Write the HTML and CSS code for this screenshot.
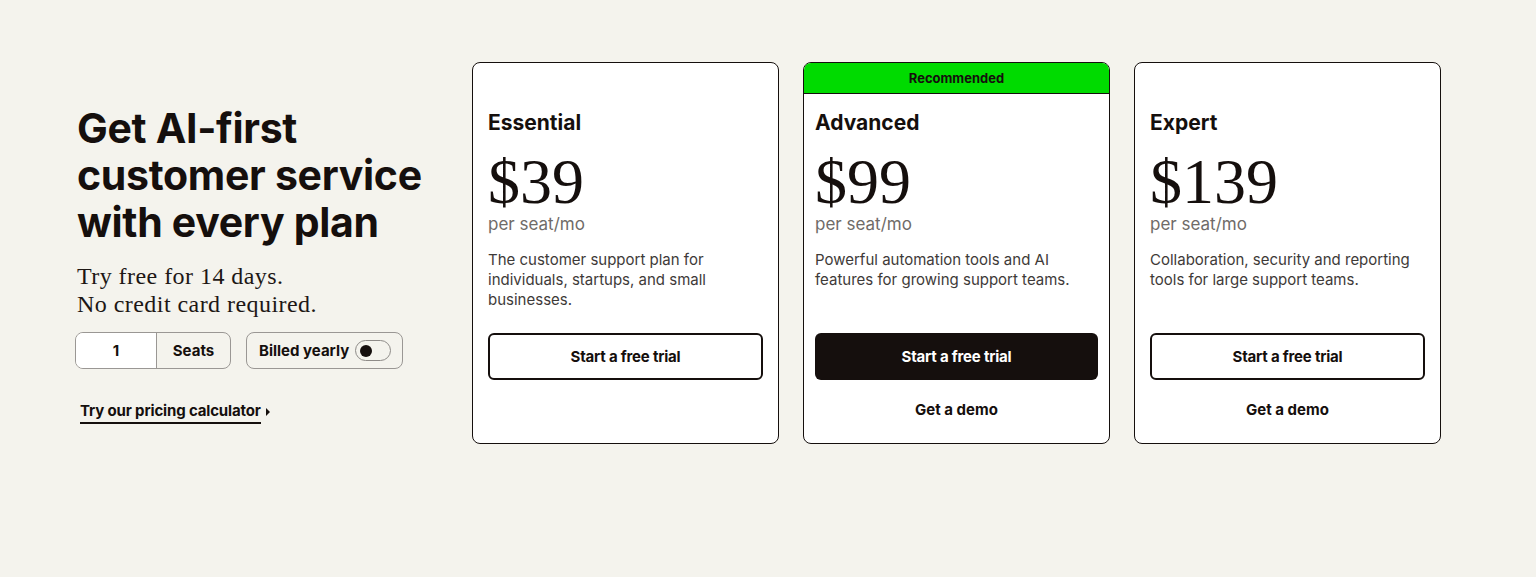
FILE: index.html
```html
<!DOCTYPE html>
<html lang="en">
<head>
<meta charset="utf-8">
<title>Pricing</title>
<link rel="stylesheet" href="styles.css">
</head>
<body>
<main class="pricing">
  <section class="intro">
    <h1 class="intro-title">Get AI-first customer service with every plan</h1>
    <p class="intro-sub">Try free for 14 days.<br>No credit card required.</p>
    <div class="controls">
      <div class="seats">
        <span class="seats-input">1</span>
        <span class="seats-label">Seats</span>
      </div>
      <div class="billing">
        <span class="billing-label">Billed yearly</span>
        <span class="toggle"><span class="knob"></span></span>
      </div>
    </div>
    <a class="calc-link" href="#"><span class="calc-text">Try our pricing calculator</span><span class="caret"></span></a>
  </section>

  <section class="plans">
    <article class="plan">
      <div class="plan-top"></div>
      <h2 class="plan-name">Essential</h2>
      <div class="plan-price">$39</div>
      <div class="plan-unit">per seat/mo</div>
      <p class="plan-desc">The customer support plan for individuals, startups, and small businesses.</p>
      <a class="btn btn-outline" href="#">Start a free trial</a>
    </article>

    <article class="plan plan-featured">
      <div class="plan-top plan-badge">Recommended</div>
      <h2 class="plan-name">Advanced</h2>
      <div class="plan-price">$99</div>
      <div class="plan-unit">per seat/mo</div>
      <p class="plan-desc">Powerful automation tools and AI features for growing support teams.</p>
      <a class="btn btn-solid" href="#">Start a free trial</a>
      <a class="demo" href="#">Get a demo</a>
    </article>

    <article class="plan">
      <div class="plan-top"></div>
      <h2 class="plan-name">Expert</h2>
      <div class="plan-price">$139</div>
      <div class="plan-unit">per seat/mo</div>
      <p class="plan-desc">Collaboration, security and reporting tools for large support teams.</p>
      <a class="btn btn-outline" href="#">Start a free trial</a>
      <a class="demo" href="#">Get a demo</a>
    </article>
  </section>
</main>
</body>
</html>
```

FILE: styles.css
```css
* { box-sizing: border-box; }

html, body {
  margin: 0;
  padding: 0;
}

body {
  background: #f4f3ed;
  color: #150f0d;
  font-family: Inter, "Liberation Sans", sans-serif;
  height: 577px;
  overflow: hidden;
}

.pricing {
  display: flex;
  align-items: stretch;
  padding-top: 62px;
  padding-left: 75px;
}

.intro {
  width: 397px;
  padding-top: 43px;
}

.intro-title {
  margin: 0 0 0 2px;
  font-family: Inter, "Liberation Sans", sans-serif;
  font-weight: 700;
  font-size: 41px;
  line-height: 47px;
  letter-spacing: -0.3px;
  width: 370px;
}

.intro-sub {
  margin: 16px 0 0 2px;
  font-family: "Liberation Serif", serif;
  font-size: 24px;
  line-height: 28px;
  letter-spacing: 0.45px;
  color: #1d1715;
}

.controls {
  display: flex;
  gap: 15px;
  margin-top: 14px;
}

.seats {
  display: flex;
  width: 156px;
  height: 37px;
  border: 1px solid #9a9794;
  border-radius: 8px;
  overflow: hidden;
}

.seats-input {
  width: 81px;
  background: #fff;
  border-right: 1px solid #9a9794;
  display: flex;
  align-items: center;
  justify-content: center;
  font-weight: 700;
  font-size: 15px;
}

.seats-label {
  flex: 1;
  display: flex;
  align-items: center;
  justify-content: center;
  font-weight: 700;
  font-size: 15px;
}

.billing {
  display: flex;
  align-items: center;
  gap: 6px;
  width: 157px;
  height: 37px;
  border: 1px solid #9a9794;
  border-radius: 8px;
  padding-left: 12px;
}

.billing-label {
  font-weight: 700;
  font-size: 15px;
}

.toggle {
  width: 36px;
  height: 21px;
  border: 1px solid #8e8b88;
  border-radius: 11px;
  display: flex;
  align-items: center;
  padding-left: 4px;
}

.knob {
  width: 12px;
  height: 12px;
  border-radius: 50%;
  background: #150f0d;
}

.calc-link {
  display: inline-flex;
  align-items: center;
  margin: 32px 0 0 5px;
  color: #150f0d;
  text-decoration: none;
  font-weight: 700;
  font-size: 15px;
  line-height: 20px;
  letter-spacing: -0.15px;
}

.calc-text {
  border-bottom: 2px solid #150f0d;
  padding-bottom: 1px;
}

.caret {
  width: 0;
  height: 0;
  margin-left: 5px;
  margin-top: -1px;
  border-top: 4px solid transparent;
  border-bottom: 4px solid transparent;
  border-left: 4px solid #150f0d;
}

.plans {
  display: flex;
  gap: 24px;
}

.plan {
  width: 307px;
  height: 382px;
  background: #fff;
  border: 1px solid #150f0d;
  border-radius: 8px;
  overflow: hidden;
  display: flex;
  flex-direction: column;
  padding: 0 15px;
}

.plan-featured {
  padding: 0 11px;
}

.plan-top {
  height: 31px;
  margin: 0 -15px;
  flex: none;
}

.plan-badge {
  margin: 0 -11px;
  background: #00db00;
  font-size: 13px;
  font-weight: 700;
  display: flex;
  align-items: center;
  justify-content: center;
  border-bottom: 1px solid #150f0d;
}

.plan-name {
  margin: 15px 0 0;
  font-size: 21px;
  line-height: 28px;
  font-weight: 700;
}

.plan-price {
  margin-top: 13px;
  font-family: "Liberation Serif", serif;
  font-size: 64px;
  line-height: 64px;
}

.plan-unit {
  font-size: 17px;
  line-height: 20px;
  color: #6f6b68;
}

.plan-desc {
  margin: 16px 0 23px;
  min-height: 60px;
  font-size: 15px;
  line-height: 20px;
  color: #3e3a38;
}

.btn {
  display: flex;
  align-items: center;
  justify-content: center;
  height: 47px;
  border-radius: 6px;
  font-weight: 700;
  font-size: 15px;
  text-decoration: none;
  letter-spacing: -0.2px;
}

.btn-outline {
  border: 2px solid #150f0d;
  color: #150f0d;
}

.btn-solid {
  background: #150f0d;
  color: #fff;
}

.demo {
  display: flex;
  align-items: center;
  justify-content: center;
  height: 47px;
  margin-top: 6px;
  font-weight: 700;
  font-size: 15px;
  color: #150f0d;
  text-decoration: none;
}
```
